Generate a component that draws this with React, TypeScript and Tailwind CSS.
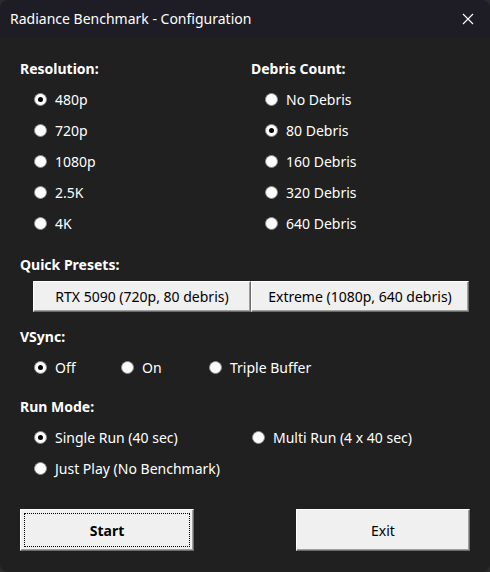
import React from "react";

type RadioProps = { label: string; checked?: boolean; className?: string };

function Radio({ label, checked, className }: RadioProps) {
  return (
    <div className={`flex h-[31px] items-center gap-[8px] ${className ?? ""}`}>
      <span className="flex h-[13px] w-[13px] shrink-0 items-center justify-center rounded-full border border-[#8c8c8c] bg-white">
        {checked && <span className="h-[5px] w-[5px] rounded-full bg-black" />}
      </span>
      <span className="text-[14px] leading-none text-white">{label}</span>
    </div>
  );
}

function Heading({ children, className }: { children: React.ReactNode; className?: string }) {
  return (
    <div className={`flex h-[20px] items-center text-[14px] font-bold text-white ${className ?? ""}`}>
      {children}
    </div>
  );
}

const btn =
  "flex items-center justify-center bg-[#f0f0f0] text-[14px] text-black border border-t-white border-l-white border-r-[#6b6b6b] border-b-[#6b6b6b] shadow-[inset_-1px_-1px_0_#a0a0a0]";

export default function App() {
  return (
    <div
      className="h-[572px] w-[490px] bg-[#2b2b2b]"
      style={{ fontFamily: '"Noto Sans", "Open Sans", sans-serif' }}
    >
      <div className="flex h-full flex-col overflow-hidden rounded-lg">
        {/* Title bar */}
        <div className="flex h-[37px] shrink-0 items-center justify-between bg-[#1e1d25] pl-[10px] pr-[16px]">
          <span className="text-[14px] text-white">Radiance Benchmark - Configuration</span>
          <svg width="12" height="12" viewBox="0 0 12 12" className="text-white">
            <path d="M1 1 L11 11 M11 1 L1 11" stroke="currentColor" strokeWidth="1.1" />
          </svg>
        </div>

        {/* Body */}
        <div className="flex flex-1 flex-col bg-[#202020] px-[20px] pt-[21px]">
          <div className="flex">
            <div className="w-[231px]">
              <Heading>Resolution:</Heading>
              <div className="mt-[6px] pl-[14px]">
                <Radio label="480p" checked />
                <Radio label="720p" />
                <Radio label="1080p" />
                <Radio label="2.5K" />
                <Radio label="4K" />
              </div>
            </div>
            <div>
              <Heading>Debris Count:</Heading>
              <div className="mt-[6px] pl-[14px]">
                <Radio label="No Debris" />
                <Radio label="80 Debris" checked />
                <Radio label="160 Debris" />
                <Radio label="320 Debris" />
                <Radio label="640 Debris" />
              </div>
            </div>
          </div>

          <Heading className="mt-[15px]">Quick Presets:</Heading>
          <div className="ml-[13px] mt-[7px] flex h-[31px] w-[436px]">
            <button className={`${btn} w-[218px]`}>RTX 5090 (720p, 80 debris)</button>
            <button className={`${btn} w-[218px]`}>Extreme (1080p, 640 debris)</button>
          </div>

          <Heading className="mt-[14px]">VSync:</Heading>
          <div className="mt-[6px] flex pl-[14px]">
            <Radio label="Off" checked className="w-[87px]" />
            <Radio label="On" className="w-[88px]" />
            <Radio label="Triple Buffer" />
          </div>

          <Heading className="mt-[13px]">Run Mode:</Heading>
          <div className="mt-[6px] pl-[14px]">
            <div className="flex">
              <Radio label="Single Run (40 sec)" checked className="w-[218px]" />
              <Radio label="Multi Run (4 x 40 sec)" />
            </div>
            <Radio label="Just Play (No Benchmark)" />
          </div>

          <div className="mt-[25px] flex justify-between">
            <button className={`${btn} h-[42px] w-[174px] p-[3px] font-bold`}>
              <span className="flex h-full w-full items-center justify-center border border-dotted border-black">
                Start
              </span>
            </button>
            <button className={`${btn} h-[42px] w-[174px]`}>Exit</button>
          </div>
        </div>
      </div>
    </div>
  );
}
